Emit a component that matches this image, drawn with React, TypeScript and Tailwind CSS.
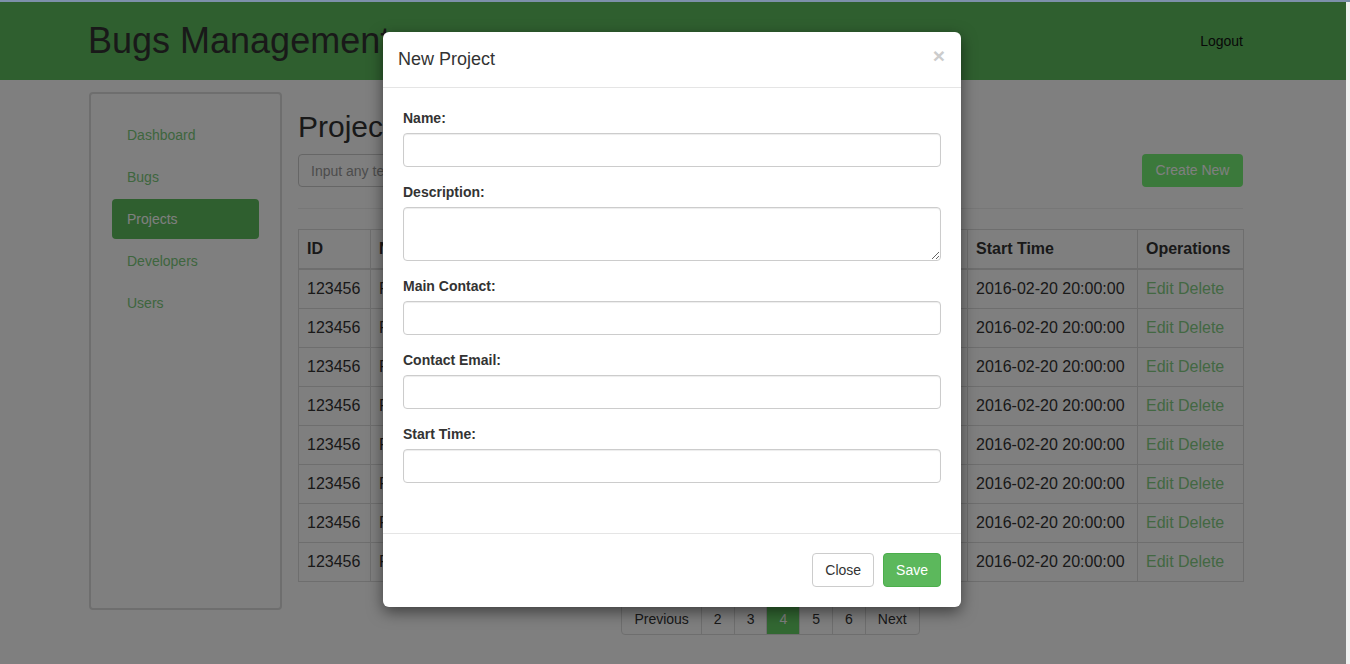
import React from "react";

const navItems = ["Dashboard", "Bugs", "Projects", "Developers", "Users"];
const columns = [
  { label: "ID", w: "w-[72px]" },
  { label: "Name", w: "w-[130px]" },
  { label: "Description", w: "w-[187px]" },
  { label: "Main Contact", w: "w-[140px]" },
  { label: "Contact Email", w: "w-[140px]" },
  { label: "Start Time", w: "w-[170px]" },
  { label: "Operations", w: "w-[106px]" },
];
const rows = Array.from({ length: 8 }, (_, i) => ({
  id: "123456",
  name: "Project " + (i + 1),
  desc: "Bug tracking project",
  contact: "John Smith",
  email: "john@example.com",
  start: "2016-02-20 20:00:00",
}));
const pages = ["Previous", "2", "3", "4", "5", "6", "Next"];
const fields = ["Name:", "Description:", "Main Contact:", "Contact Email:", "Start Time:"];

function Field({ label }: { label: string }) {
  const isText = label === "Description:";
  return (
    <div className="mb-[15px] last:mb-0">
      <label className="mb-[5px] block text-[14px] font-bold leading-[20px] text-[#333]">
        {label}
      </label>
      {isText ? (
        <textarea className="block h-[54px] w-full rounded-[4px] border border-[#ccc] px-3 py-[6px] text-[14px] shadow-[inset_0_1px_1px_rgba(0,0,0,0.075)] outline-none" />
      ) : (
        <input
          type="text"
          className="block h-[34px] w-full rounded-[4px] border border-[#ccc] px-3 text-[14px] shadow-[inset_0_1px_1px_rgba(0,0,0,0.075)] outline-none"
        />
      )}
    </div>
  );
}

export default function App() {
  return (
    <div className="relative flex h-[664px] w-[1350px] flex-col overflow-hidden font-['Liberation_Sans',Arial,sans-serif] text-[#333]">
      <div className="relative z-30 h-[2px] bg-[#7d90aa]" />
      <div className="flex flex-1">
        {/* page behind the modal */}
        <div className="flex-1 bg-white">
          <header className="h-[78px] bg-[#5ebe5e]">
            <div className="ml-[88px] flex h-full w-[1155px] items-center justify-between">
              <span className="text-[36px] leading-none text-[#333]">Bugs Management</span>
              <a className="text-[14px] text-[#111]">Logout</a>
            </div>
          </header>
          <div className="ml-[89px] mt-[12px] flex gap-[16px]">
            <aside className="h-[518px] w-[193px] rounded-[4px] border-2 border-[#dcdcdc] px-[21px] pt-[21px]">
              <ul className="flex flex-col gap-[2px]">
                {navItems.map((n) => (
                  <li
                    key={n}
                    className={
                      n === "Projects"
                        ? "flex h-[40px] items-center rounded-[4px] bg-[#5ebe5e] px-[15px] text-[14px] text-white"
                        : "flex h-[40px] items-center px-[15px] text-[14px] text-[#7ccc7c]"
                    }
                  >
                    {n}
                  </li>
                ))}
              </ul>
            </aside>
            <main className="w-[945px]">
              <h2 className="mt-[18px] text-[30px] leading-[33px]">Projects</h2>
              <div className="mt-[11px] flex items-center justify-between">
                <input
                  type="text"
                  placeholder="Input any text to search"
                  className="h-[33px] w-[400px] rounded-[4px] border border-[#ccc] px-3 text-[14px] placeholder:text-[#999]"
                />
                <button className="h-[33px] w-[101px] rounded-[4px] bg-[#76f276] text-[14px] text-white">
                  Create New
                </button>
              </div>
              <div className="mt-[21px] border-t border-[#eee]" />
              <table className="mt-[20px] w-[945px] table-fixed border-collapse text-[16px] leading-[22px]">
                <thead>
                  <tr>
                    {columns.map((c) => (
                      <th
                        key={c.label}
                        className={`${c.w} border border-b-2 border-[#ddd] px-2 py-[8px] text-left font-bold`}
                      >
                        {c.label}
                      </th>
                    ))}
                  </tr>
                </thead>
                <tbody>
                  {rows.map((r, i) => (
                    <tr key={i}>
                      <td className="truncate border border-[#ddd] px-2 py-2">{r.id}</td>
                      <td className="truncate border border-[#ddd] px-2 py-2">{r.name}</td>
                      <td className="truncate border border-[#ddd] px-2 py-2">{r.desc}</td>
                      <td className="truncate border border-[#ddd] px-2 py-2">{r.contact}</td>
                      <td className="truncate border border-[#ddd] px-2 py-2">{r.email}</td>
                      <td className="truncate border border-[#ddd] px-2 py-2">{r.start}</td>
                      <td className="truncate border border-[#ddd] px-2 py-2 text-[#86d086]">
                        Edit Delete
                      </td>
                    </tr>
                  ))}
                </tbody>
              </table>
              <div className="mt-[21px] flex justify-center">
                <ul className="flex overflow-hidden rounded-[4px] border border-[#ddd] text-[14px] leading-[20px]">
                  {pages.map((p, i) => (
                    <li
                      key={p}
                      className={`px-3 py-[5px] ${i > 0 ? "border-l border-[#ddd]" : ""} ${
                        p === "4" ? "bg-[#64d064] text-white" : "text-[#333]"
                      }`}
                    >
                      {p}
                    </li>
                  ))}
                </ul>
              </div>
            </main>
          </div>
        </div>
        <div className="relative z-30 w-[4px] bg-[#f0f0f0]" />
      </div>

      {/* backdrop */}
      <div className="absolute bottom-0 left-0 right-[4px] top-[2px] z-10 bg-black/50" />

      {/* modal */}
      <div className="absolute left-[383px] top-[32px] z-20 w-[578px] rounded-[6px] bg-white shadow-[0_5px_15px_rgba(0,0,0,0.5)]">
        <div className="flex h-[56px] items-center justify-between border-b border-[#e5e5e5] pl-[15px] pr-[16px]">
          <h4 className="text-[18px] leading-[25px] text-[#333]">New Project</h4>
          <span className="relative -top-[4px] text-[21px] font-bold leading-none text-[#ccc]">×</span>
        </div>
        <div className="px-[20px] pb-[50px] pt-[20px]">
          {fields.map((f) => (
            <Field key={f} label={f} />
          ))}
        </div>
        <div className="flex justify-end gap-[9px] border-t border-[#e5e5e5] px-[20px] pb-[20px] pt-[19px]">
          <button className="h-[34px] rounded-[4px] border border-[#ccc] bg-white px-3 text-[14px] text-[#333]">
            Close
          </button>
          <button className="h-[34px] rounded-[4px] border border-[#4cae4c] bg-[#5cb85c] px-3 text-[14px] text-white">
            Save
          </button>
        </div>
      </div>
    </div>
  );
}
